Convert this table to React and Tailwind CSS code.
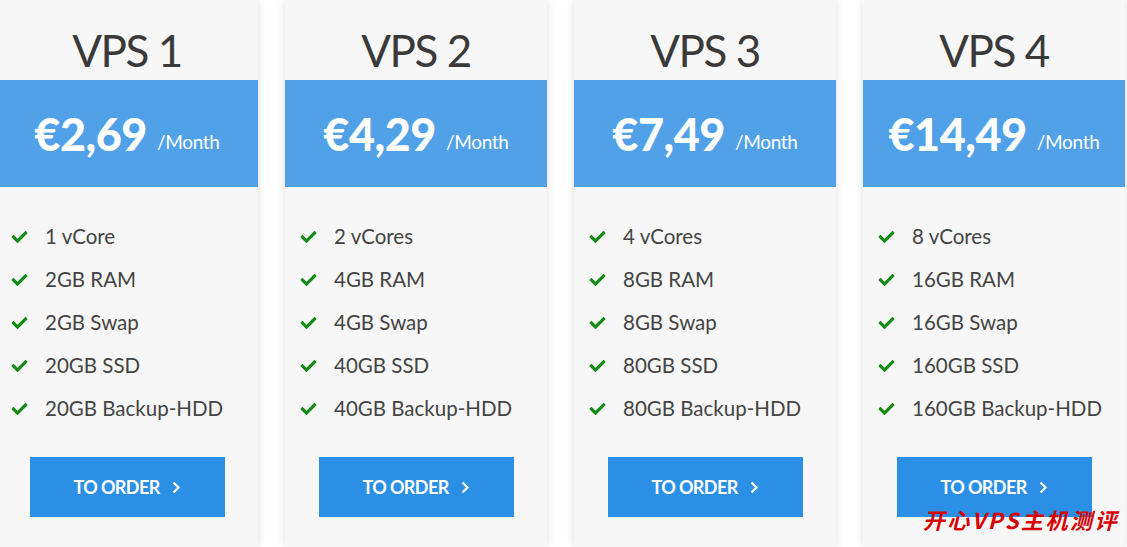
import { FaCheck } from 'react-icons/fa'

const plans = [
  { name: 'VPS 1', price: '€2,69', features: ['1 vCore', '2GB RAM', '2GB Swap', '20GB SSD', '20GB Backup-HDD'] },
  { name: 'VPS 2', price: '€4,29', features: ['2 vCores', '4GB RAM', '4GB Swap', '40GB SSD', '40GB Backup-HDD'] },
  { name: 'VPS 3', price: '€7,49', features: ['4 vCores', '8GB RAM', '8GB Swap', '80GB SSD', '80GB Backup-HDD'] },
  { name: 'VPS 4', price: '€14,49', features: ['8 vCores', '16GB RAM', '16GB Swap', '160GB SSD', '160GB Backup-HDD'] },
]

// Single pricing column
function PlanCard({ plan }) {
  return (
    <div className="w-[262px] shrink-0 h-full bg-[#f7f7f7] shadow-[0_0_8px_rgba(0,0,0,0.13)] flex flex-col">
      <div className="h-[80px] pt-[28px] flex justify-center">
        <h2 className="text-[44px] leading-[44px] font-normal text-[#3a3a3a] tracking-[-1.5px]">{plan.name}</h2>
      </div>

      <div className="h-[107px] bg-[#51a1e9] flex items-center justify-center gap-[10px] text-white pt-[2px]">
        <span className="text-[45px] font-black leading-none tracking-[-0.5px]">{plan.price}</span>
        <span className="text-[19px] leading-none mt-[14px] tracking-[-0.3px]">/Month</span>
      </div>

      <ul className="pt-[28px] pl-[14px]">
        {plan.features.map((f) => (
          <li key={f} className="h-[43px] flex items-center gap-[16px]">
            <FaCheck className="w-[19px] h-[16px] text-[#168a16]" />
            <span className="text-[20.5px] text-[#444]">{f}</span>
          </li>
        ))}
      </ul>

      <div className="pt-[27px] flex justify-center">
        <button className="w-[195px] h-[60px] bg-[#2b8fe5] text-white flex items-center justify-center gap-[12px]">
          <span className="text-[18px] font-bold tracking-[-0.6px]">TO ORDER</span>
          <svg width="9" height="13" viewBox="0 0 9 13" fill="none">
            <path d="M1.5 1.5 L6.5 6.5 L1.5 11.5" stroke="white" strokeWidth="2.2" />
          </svg>
        </button>
      </div>
    </div>
  )
}

export default function App() {
  return (
    <div
      className="relative w-[1127px] h-[547px] overflow-hidden bg-white"
      style={{ fontFamily: 'Lato, "Open Sans", sans-serif' }}
    >
      <div className="flex gap-[27px] h-full ml-[-4px]">
        {plans.map((p) => (
          <PlanCard key={p.name} plan={p} />
        ))}
      </div>

      {/* watermark */}
      <div
        className="absolute right-[8px] bottom-[17px] text-[22px] leading-none font-bold italic text-[#d80000] tracking-[2.5px]"
        style={{ fontFamily: '"Noto Sans CJK SC", sans-serif' }}
      >
        开心VPS主机测评
      </div>
    </div>
  )
}
